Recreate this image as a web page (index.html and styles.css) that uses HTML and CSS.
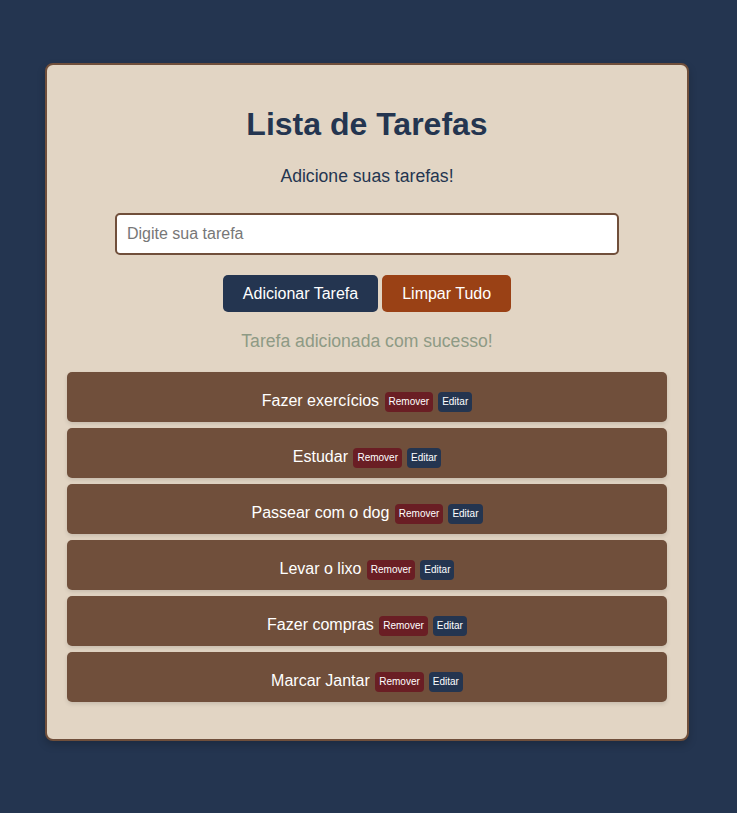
FILE: index.html
```html
<!DOCTYPE html>
<html lang="pt-BR">
<head>
<meta charset="UTF-8">
<title>Lista de Tarefas</title>
<link rel="stylesheet" href="styles.css">
</head>
<body>
<div class="container">
  <h1 class="title">Lista de Tarefas</h1>
  <p class="subtitle">Adicione suas tarefas!</p>
  <input class="task-input" type="text" placeholder="Digite sua tarefa">
  <div class="actions">
    <button class="btn btn-add">Adicionar Tarefa</button>
    <button class="btn btn-clear">Limpar Tudo</button>
  </div>
  <p class="message">Tarefa adicionada com sucesso!</p>
  <ul class="task-list">
    <li class="task">Fazer exercícios <button class="small remove">Remover</button><button class="small edit">Editar</button></li>
    <li class="task">Estudar <button class="small remove">Remover</button><button class="small edit">Editar</button></li>
    <li class="task">Passear com o dog <button class="small remove">Remover</button><button class="small edit">Editar</button></li>
    <li class="task">Levar o lixo <button class="small remove">Remover</button><button class="small edit">Editar</button></li>
    <li class="task">Fazer compras <button class="small remove">Remover</button><button class="small edit">Editar</button></li>
    <li class="task">Marcar Jantar <button class="small remove">Remover</button><button class="small edit">Editar</button></li>
  </ul>
</div>
</body>
</html>
```
FILE: styles.css
```css
html, body {
  margin: 0;
  background: #243550;
}
body {
  font-family: "Liberation Sans", Arial, sans-serif;
  padding: 63px 48px 0 45px;
  min-height: 813px;
  box-sizing: border-box;
}
.container {
  max-width: 600px;
  margin: 0 auto;
  padding: 20px;
  background: #e2d5c4;
  border: 2px solid #704f3b;
  border-radius: 8px;
  box-shadow: 0 4px 8px rgba(0, 0, 0, 0.2);
  text-align: center;
}
.title {
  font-size: 32px;
  margin: 21px 0 23px;
  color: #243550;
}
.subtitle {
  font-size: 17.6px;
  color: #243550;
  margin: 0;
}
.task-input {
  display: block;
  margin: 26px auto 0;
  width: 80%;
  padding: 10px;
  font-size: 16px;
  font-family: "Liberation Sans", Arial, sans-serif;
  border: 2px solid #704f3b;
  border-radius: 5px;
  background: #fff;
  color: #333;
  outline: none;
}
.task-input::placeholder {
  color: #777;
}
.actions {
  margin-top: 20px;
  display: flex;
  justify-content: center;
  gap: 4px;
}
.btn {
  font-family: "Liberation Sans", Arial, sans-serif;
  font-size: 16px;
  padding: 10px 20px;
  border: none;
  border-radius: 5px;
  color: #fff;
  line-height: 17px;
}
.btn-add {
  background: #243550;
}
.btn-clear {
  background: #9a4115;
}
.message {
  font-size: 17.6px;
  color: #8e9a85;
  margin: 19px 0 0;
}
.task-list {
  list-style: none;
  padding: 0;
  margin: 20px 0 0;
}
.task {
  background: #704f3b;
  color: #fff;
  font-size: 16px;
  height: 50px;
  box-sizing: border-box;
  padding-top: 20px;
  margin-bottom: 6px;
  border-radius: 5px;
  box-shadow: 0 2px 4px rgba(0, 0, 0, 0.12);
  line-height: 18px;
}
.task:last-child {
  margin-bottom: 17px;
}
.small {
  font-family: "Liberation Sans", Arial, sans-serif;
  font-size: 10px;
  line-height: 12px;
  padding: 4px 4px;
  margin-left: 5px;
  border: none;
  border-radius: 4px;
  color: #fff;
  vertical-align: 1px;
}
.remove {
  background: #6a1e24;
  margin-left: 1px;
}
.edit {
  background: #243550;
}
```
